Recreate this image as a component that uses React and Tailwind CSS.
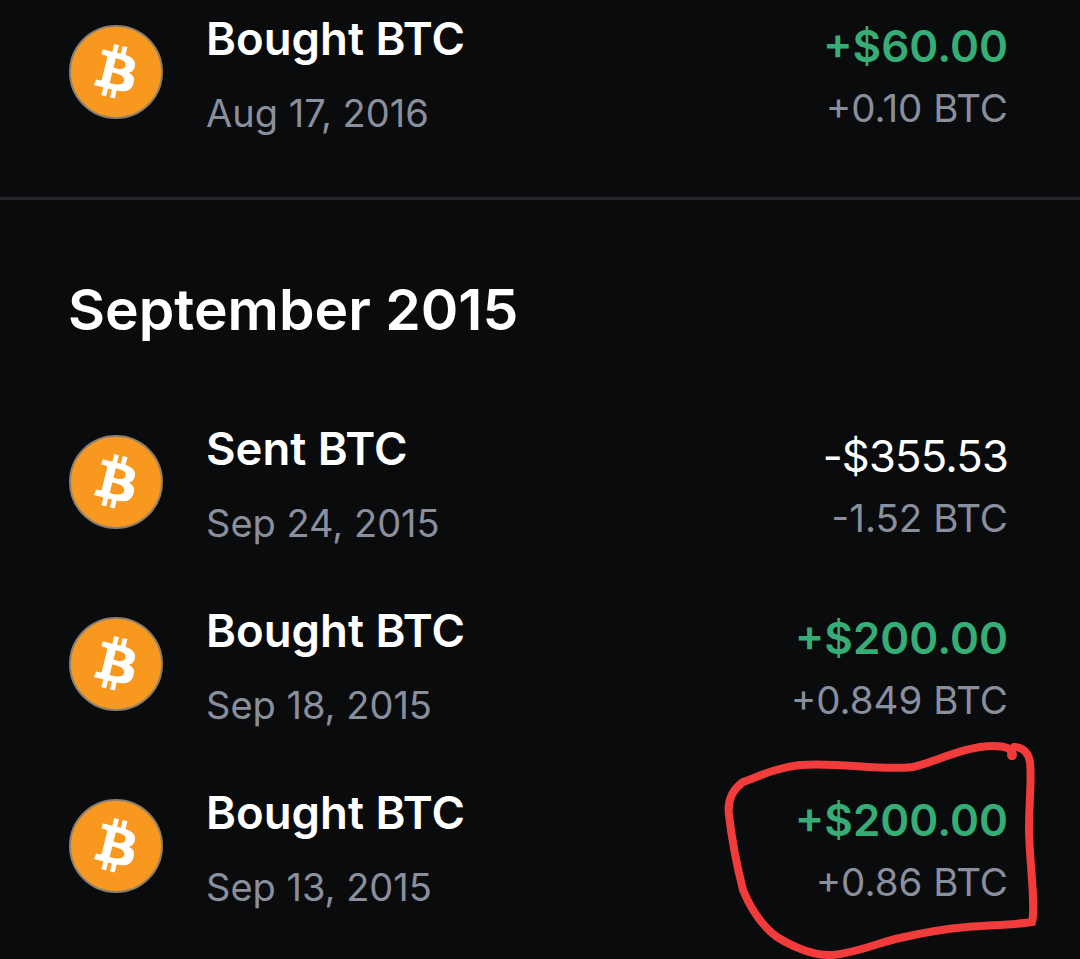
import React from "react";

const BitcoinIcon = () => (
  <div className="h-[94px] w-[94px] shrink-0 rounded-full border-2 border-[#8a7f70] bg-[#f8981f] flex items-center justify-center">
    <svg viewBox="0 0 64 64" className="h-[86px] w-[86px]" fill="#ffffff">
      <path d="M46.1 27.441c.637-4.258-2.605-6.547-7.038-8.074l1.438-5.768-3.511-.875-1.4 5.616c-.923-.23-1.871-.447-2.813-.662l1.41-5.653-3.509-.875-1.439 5.766c-.764-.174-1.514-.346-2.242-.527l.004-.018-4.842-1.209-.934 3.75s2.605.597 2.55.634c1.422.355 1.679 1.296 1.636 2.042l-1.638 6.571c.098.025.225.061.365.117l-.371-.092-2.296 9.205c-.174.432-.615 1.08-1.609.834.035.051-2.552-.637-2.552-.637l-1.743 4.019 4.569 1.139c.85.213 1.683.436 2.503.646l-1.453 5.834 3.507.875 1.439-5.772c.958.26 1.888.5 2.798.726l-1.434 5.745 3.511.875 1.453-5.823c5.987 1.133 10.489.676 12.384-4.739 1.527-4.36-.076-6.875-3.226-8.515 2.294-.529 4.022-2.038 4.483-5.155zM38.08 38.69c-1.085 4.36-8.426 2.003-10.806 1.412l1.928-7.729c2.38.594 10.012 1.77 8.878 6.317zm1.086-11.312c-.99 3.966-7.1 1.951-9.082 1.457l1.748-7.01c1.982.494 8.365 1.416 7.334 5.553z" />
    </svg>
  </div>
);

const Row = ({ title, date, amount, crypto, green }) => (
  <div className="h-[182px] flex items-center pl-[69px] pr-[72px]">
    <BitcoinIcon />
    <div className="ml-[44px] flex-1 mt-[8px]">
      <div className="text-[45.5px] leading-[52px] font-semibold text-white -ml-[1px]">{title}</div>
      <div className="mt-[22px] text-[38px] leading-[52px] text-[#8a8f9e] -ml-[1px]">{date}</div>
    </div>
    <div className="text-right mt-[10px]">
      {green ? (
        <div className="text-[44px] leading-[52px] font-semibold text-[#35ad74]">{amount}</div>
      ) : (
        <div className="text-[43.5px] leading-[52px] tracking-[-0.8px] text-white">{amount}</div>
      )}
      <div className="mt-[10px] text-[38.5px] leading-[52px] text-[#8a8f9e]">{crypto}</div>
    </div>
  </div>
);

export default function App() {
  return (
    <div className="relative h-[959px] w-[1080px] overflow-hidden bg-[#0a0b0d] font-['Inter',sans-serif]">
      <div className="-mt-[19px]">
        <Row title="Bought BTC" date="Aug 17, 2016" amount="+$60.00" crypto="+0.10 BTC" green />
      </div>
      <div className="mt-[34px] h-[3px] bg-[#25272b]" />
      <h2 className="mt-[80px] pl-[68px] text-[57px] leading-[60px] font-semibold text-white">September 2015</h2>
      <div className="mt-[51px]">
        <Row title="Sent BTC" date="Sep 24, 2015" amount="-$355.53" crypto="-1.52 BTC" />
        <Row title="Bought BTC" date="Sep 18, 2015" amount="+$200.00" crypto="+0.849 BTC" green />
        <Row title="Bought BTC" date="Sep 13, 2015" amount="+$200.00" crypto="+0.86 BTC" green />
      </div>
      {/* red pen annotation */}
      <svg className="absolute left-0 top-0" width="1080" height="959" fill="none">
        <path
          d="M1012 756 C1014 748 1004 746 993 746 C965 746 935 762 913 767 C880 771 840 762 800 765 C775 768 760 776 743 782 C732 790 727 800 729 815 C733 850 738 870 743 890 C752 912 765 928 777 937 C795 948 815 956 833 955 C860 952 880 942 900 938 C925 932 945 929 967 927 C990 925 1015 925 1032 922 C1036 905 1030 870 1029 830 C1029 800 1032 780 1030 762 C1028 750 1020 747 1014 747"
          stroke="#f23b3b"
          strokeWidth="8"
          strokeLinecap="round"
        />
        <circle cx="1012" cy="755" r="5" fill="#f23b3b" />
      </svg>
    </div>
  );
}
